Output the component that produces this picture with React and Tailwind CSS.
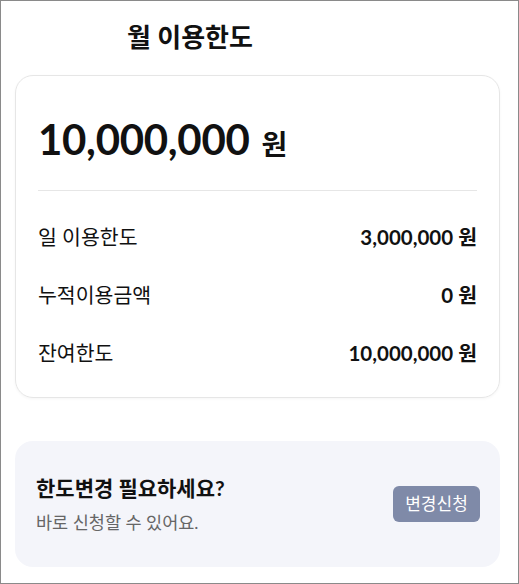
const rows = [
  { label: "일 이용한도", value: "3,000,000" },
  { label: "누적이용금액", value: "0" },
  { label: "잔여한도", value: "10,000,000" },
];

const font = { fontFamily: "Lato, 'Noto Sans CJK KR', sans-serif" };

export default function App() {
  return (
    <div
      className="w-[519px] h-[584px] bg-white border border-[#8a8a8a] text-[#111] overflow-hidden"
      style={font}
    >
      {/* Title */}
      <h1 className="pl-[126px] pt-[19px] text-[26px] font-bold leading-[34px]">
        월 이용한도
      </h1>

      {/* Limit card */}
      <div className="ml-[14px] mr-[18px] mt-[21px] rounded-[18px] border border-[#e6e6e6] shadow-[0_1px_3px_rgba(0,0,0,0.04)] px-[22px] pt-[38px] pb-[15px]">
        <div className="flex items-baseline gap-[12px] pb-[25px] border-b border-[#e6e6e6]">
          <span className="text-[42px] font-bold leading-[50px] tracking-[-0.3px]">10,000,000</span>
          <span className="text-[28px] font-bold">원</span>
        </div>

        <div className="flex flex-col pt-[17px]">
          {rows.map((r) => (
            <div key={r.label} className="flex items-center justify-between h-[58px]">
              <span className="text-[20.5px]">{r.label}</span>
              <span className="text-[20.5px] font-bold">{r.value} 원</span>
            </div>
          ))}
        </div>
      </div>

      {/* Change request */}
      <div className="ml-[14px] mr-[18px] mt-[43px] h-[126px] rounded-[18px] bg-[#f4f5fa] flex items-center justify-between pl-[21px] pr-[20px]">
        <div className="flex flex-col gap-[9px]">
          <span className="text-[21px] font-bold leading-[28px]">한도변경 필요하세요?</span>
          <span className="text-[17.5px] text-[#666] leading-[24px]">바로 신청할 수 있어요.</span>
        </div>
        <button className="w-[87px] h-[36px] rounded-[6px] bg-[#7f8aa8] text-white text-[17px]">
          변경신청
        </button>
      </div>
    </div>
  );
}
